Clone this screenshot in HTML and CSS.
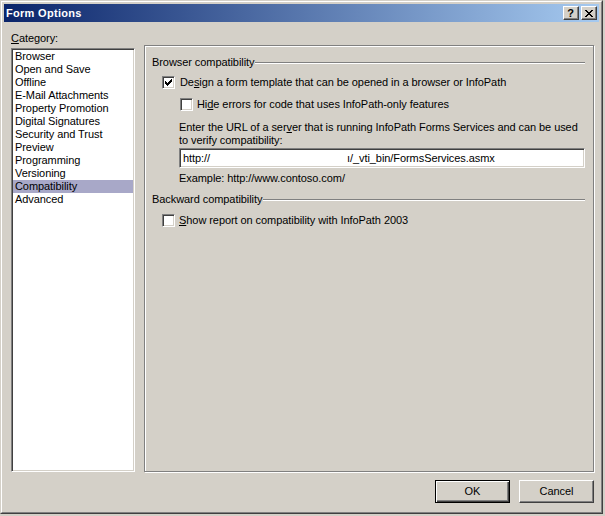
FILE: index.html
```html
<!DOCTYPE html>
<html>
<head>
<meta charset="utf-8">
<title>Form Options</title>
<link rel="stylesheet" href="styles.css">
</head>
<body>
<div class="window">
  <div class="frame">
    <div class="titlebar">
      <span class="title">Form Options</span>
      <div class="tbuttons">
        <span class="tbtn help">?</span>
        <span class="tbtn close"><svg width="8" height="7" viewBox="0 0 8 7" shape-rendering="crispEdges"><path d="M0 0h2v1h-2zM6 0h2v1h-2zM1 1h2v1h-2zM5 1h2v1h-2zM2 2h4v1h-4zM3 3h2v1h-2zM2 4h4v1h-4zM1 5h2v1h-2zM5 5h2v1h-2zM0 6h2v1h-2zM6 6h2v1h-2z" fill="#000"/></svg></span>
      </div>
    </div>
    <div class="content">
      <div class="main">
        <div class="catcol">
          <div class="label"><u>C</u>ategory:</div>
          <ul class="list">
            <li>Browser</li>
            <li>Open and Save</li>
            <li>Offline</li>
            <li>E-Mail Attachments</li>
            <li>Property Promotion</li>
            <li>Digital Signatures</li>
            <li>Security and Trust</li>
            <li>Preview</li>
            <li>Programming</li>
            <li>Versioning</li>
            <li class="selected">Compatibility</li>
            <li>Advanced</li>
          </ul>
        </div>
        <div class="panel">
          <div class="group-head"><span>Browser compatibility</span><span class="rule"></span></div>
          <div class="check-row lvl1 r1">
            <span class="cb"><svg width="9" height="9" viewBox="0 0 9 9" shape-rendering="crispEdges"><path d="M1 3h1v3h-1zM2 4h1v3h-1zM3 5h1v3h-1zM4 4h1v3h-1zM5 3h1v3h-1zM6 2h1v3h-1zM7 1h1v3h-1z" fill="#000"/></svg></span>
            <span class="cb-label">De<u>s</u>ign a form template that can be opened in a browser or InfoPath</span>
          </div>
          <div class="check-row lvl2 r2">
            <span class="cb"></span>
            <span class="cb-label">Hi<u>d</u>e errors for code that uses InfoPath-only features</span>
          </div>
          <p class="para">Enter the URL of a ser<u>v</u>er that is running InfoPath Forms Services and can be used<br>to verify compatibility:</p>
          <div class="textbox"><span class="tb-a">http://</span><span class="tb-b">ı/_vti_bin/FormsServices.asmx</span></div>
          <p class="example">Example: http://www.contoso.com/</p>
          <div class="group-head g2"><span>Backward compatibility</span><span class="rule"></span></div>
          <div class="check-row lvl1 r3">
            <span class="cb"></span>
            <span class="cb-label"><u>S</u>how report on compatibility with InfoPath 2003</span>
          </div>
        </div>
      </div>
      <div class="buttons">
        <div class="btn default"><span class="btn-in">OK</span></div>
        <div class="btn"><span class="btn-in">Cancel</span></div>
      </div>
    </div>
  </div>
</div>
</body>
</html>
```

FILE: styles.css
```css
* { box-sizing: border-box; }
html, body { margin: 0; padding: 0; }
body {
  background: #d4d0c8;
  font-family: "Liberation Sans", Arial, sans-serif;
  font-size: 11px;
  line-height: 13px;
  letter-spacing: -0.07px;
  color: #000;
  width: 605px;
  height: 516px;
  overflow: hidden;
}
u { text-decoration: underline; text-underline-offset: 1px; }

.window {
  width: 603px;
  height: 514px;
  border: 1px solid;
  border-color: #d4d0c8 #404040 #404040 #d4d0c8;
}
.frame {
  height: 100%;
  border: 1px solid;
  border-color: #fff #808080 #808080 #fff;
  padding: 2px;
  display: flex;
  flex-direction: column;
}
.titlebar {
  height: 18px;
  background: linear-gradient(to right, #0a246a, #a6caf0);
  display: flex;
  align-items: center;
  justify-content: space-between;
  padding: 0 2px 0 2px;
}
.title {
  color: #fff;
  font-weight: bold;
  font-size: 11px;
  letter-spacing: 0.3px;
}
.tbuttons { display: flex; gap: 2px; }
.tbtn {
  width: 16px;
  height: 14px;
  background: #d4d0c8;
  border: 1px solid;
  border-color: #fff #404040 #404040 #fff;
  box-shadow: inset -1px -1px 0 #808080;
  display: flex;
  align-items: center;
  justify-content: center;
  font-weight: bold;
  font-size: 11px;
  line-height: 12px;
}
.tbtn.help { padding-right: 1px; }
.tbtn svg { display: block; margin-right: 1px; }

.content {
  flex: 1;
  display: flex;
  flex-direction: column;
}
.main {
  display: flex;
  gap: 9px;
  padding-left: 7px;
  padding-right: 5px;
}
.catcol {
  width: 124px;
  padding-top: 10px;
}
.label { height: 13px; margin-bottom: 3px; }
.list {
  list-style: none;
  margin: 0;
  height: 424px;
  background: #fff;
  border: 1px solid;
  border-color: #808080 #fff #fff #808080;
  box-shadow: inset 1px 1px 0 #404040, inset -1px -1px 0 #d4d0c8;
  padding: 1px 1px 0 1px;
}
.list li {
  height: 13px;
  padding-left: 2px;
  white-space: nowrap;
}
.list li.selected { background: #a8a8c8; }

.panel {
  flex: 1;
  margin-top: 23px;
  height: 427px;
  border: 1px solid #808080;
  box-shadow: inset 1px 1px 0 #fff, 1px 1px 0 #fff;
  padding: 10px 8px 0 7px;
}
.group-head {
  display: flex;
  align-items: center;
  height: 13px;
}
.group-head .rule {
  flex: 1;
  height: 2px;
  margin-left: 1px;
  border-top: 1px solid #808080;
  border-bottom: 1px solid #fff;
  margin-top: 1px;
}
.check-row {
  display: flex;
  align-items: center;
  height: 13px;
  gap: 5px;
}
.lvl1 { padding-left: 10px; }
.lvl2 { padding-left: 28px; gap: 4px; }
.r1 { margin-top: 7px; }
.r2 { margin-top: 9px; }
.r3 { margin-top: 8px; gap: 4px; }
.cb {
  width: 13px;
  height: 13px;
  flex: none;
  background: #fff;
  border: 1px solid;
  border-color: #808080 #fff #fff #808080;
  box-shadow: inset 1px 1px 0 #404040, inset -1px -1px 0 #d4d0c8;
  padding: 1px;
}
.cb svg { display: block; }
.cb-label { white-space: nowrap; }

.para {
  margin: 10px 0 0 27px;
  white-space: nowrap;
}
.textbox {
  margin: 1px 0 0 27px;
  height: 20px;
  background: #fff;
  border: 1px solid;
  border-color: #808080 #fff #fff #808080;
  box-shadow: inset 1px 1px 0 #404040, inset -1px -1px 0 #d4d0c8;
  display: flex;
  align-items: center;
  padding-left: 3px;
  white-space: nowrap;
}
.tb-a { width: 164px; }
.example { margin: 4px 0 0 27px; }
.g2 { margin-top: 8px; }

.buttons {
  display: flex;
  justify-content: flex-end;
  gap: 9px;
  padding-right: 5px;
  margin-top: 8px;
}
.btn {
  width: 75px;
  height: 23px;
  border: 1px solid;
  border-color: #fff #404040 #404040 #fff;
  box-shadow: inset -1px -1px 0 #808080;
  display: flex;
  align-items: center;
  justify-content: center;
}
.btn.default {
  border: 1px solid #000;
  box-shadow: inset 1px 1px 0 #fff, inset -1px -1px 0 #404040, inset -2px -2px 0 #808080;
}
.btn-in { padding-bottom: 1px; }
```
